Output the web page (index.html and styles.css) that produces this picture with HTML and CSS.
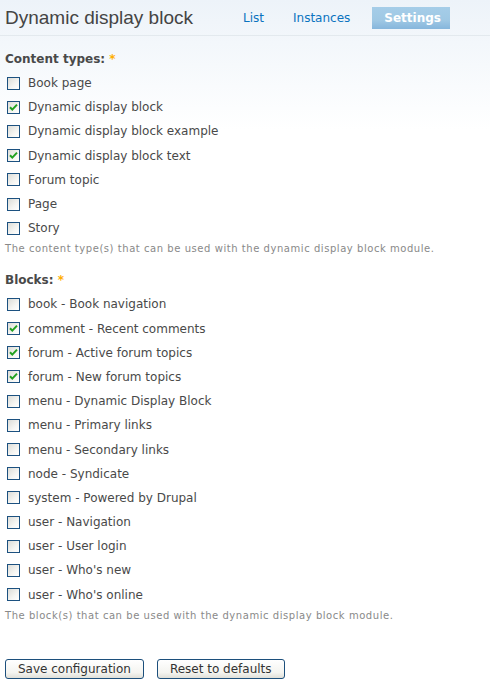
FILE: index.html
```html
<!DOCTYPE html>
<html lang="en">
<head>
    <meta charset="UTF-8">
    <title>Dynamic display block</title>
    <link rel="stylesheet" href="styles.css">
</head>
<body>

<div class="header">
    <h1>Dynamic display block</h1>
    <ul class="tabs">
        <li><a href="#">List</a></li>
        <li><a href="#">Instances</a></li>
        <li class="active"><a href="#">Settings</a></li>
    </ul>
</div>

<form class="settings">
    <div class="form-item">
        <div class="form-label">Content types: <span class="required">*</span></div>
        <div class="options">
            <label class="option"><span class="box"></span>Book page</label>
            <label class="option"><span class="box"><svg viewBox="0 0 9 9"><path d="M1 4.2 L3.3 6.6 L8 1.6" /></svg></span>Dynamic display block</label>
            <label class="option"><span class="box"></span>Dynamic display block example</label>
            <label class="option"><span class="box"><svg viewBox="0 0 9 9"><path d="M1 4.2 L3.3 6.6 L8 1.6" /></svg></span>Dynamic display block text</label>
            <label class="option"><span class="box"></span>Forum topic</label>
            <label class="option"><span class="box"></span>Page</label>
            <label class="option"><span class="box"></span>Story</label>
        </div>
        <div class="description">The content type(s) that can be used with the dynamic display block module.</div>
    </div>

    <div class="form-item">
        <div class="form-label">Blocks: <span class="required">*</span></div>
        <div class="options">
            <label class="option"><span class="box"></span>book - Book navigation</label>
            <label class="option"><span class="box"><svg viewBox="0 0 9 9"><path d="M1 4.2 L3.3 6.6 L8 1.6" /></svg></span>comment - Recent comments</label>
            <label class="option"><span class="box"><svg viewBox="0 0 9 9"><path d="M1 4.2 L3.3 6.6 L8 1.6" /></svg></span>forum - Active forum topics</label>
            <label class="option"><span class="box"><svg viewBox="0 0 9 9"><path d="M1 4.2 L3.3 6.6 L8 1.6" /></svg></span>forum - New forum topics</label>
            <label class="option"><span class="box"></span>menu - Dynamic Display Block</label>
            <label class="option"><span class="box"></span>menu - Primary links</label>
            <label class="option"><span class="box"></span>menu - Secondary links</label>
            <label class="option"><span class="box"></span>node - Syndicate</label>
            <label class="option"><span class="box"></span>system - Powered by Drupal</label>
            <label class="option"><span class="box"></span>user - Navigation</label>
            <label class="option"><span class="box"></span>user - User login</label>
            <label class="option"><span class="box"></span>user - Who's new</label>
            <label class="option"><span class="box"></span>user - Who's online</label>
        </div>
        <div class="description">The block(s) that can be used with the dynamic display block module.</div>
    </div>

    <div class="buttons">
        <button type="button" class="button">Save configuration</button>
        <button type="button" class="button">Reset to defaults</button>
    </div>
</form>

</body>
</html>
```

FILE: styles.css
```css
html {
    background-color: #fff;
}
body {
    margin: 0;
    font-family: "DejaVu Sans", Verdana, sans-serif;
    font-size: 12px;
    color: #494949;
    background: #fff linear-gradient(#edf3f9 0px, #ffffff 130px) no-repeat;
    background-size: 100% 130px;
}
.header {
    display: flex;
    align-items: center;
    height: 35px;
    border-bottom: 1px solid #e3e9ee;
    padding-left: 5px;
}
h1 {
    margin: 0;
    width: 227px;
    font-family: "Liberation Sans", Arial, sans-serif;
    font-size: 19px;
    font-weight: normal;
    color: #444;
}
.tabs {
    display: flex;
    margin: 0;
    padding: 0;
    list-style: none;
}
.tabs li a {
    display: block;
    padding: 4px 12px 4px 11px;
    margin-right: 6px;
    font-size: 12px;
    color: #0a73bf;
    text-decoration: none;
}
.tabs li.active a {
    width: 54px;
    margin-left: 4px;
    padding: 4px 12px;
    text-align: center;
    color: #fff;
    font-weight: bold;
    background: linear-gradient(#a5cde8 0%, #9fc8e4 60%, #86b6dc 100%);
}
.settings {
    padding: 12px 5px 0 5px;
}
.form-item {
    margin-bottom: 15px;
}
.form-label {
    font-weight: bold;
    height: 23px;
    line-height: 23px;
}
.required {
    color: #ffae00;
}
.option {
    display: flex;
    align-items: center;
    height: 24.2px;
    padding-left: 2px;
}
.box {
    display: flex;
    align-items: center;
    justify-content: center;
    width: 11px;
    height: 11px;
    margin-right: 8px;
    border: 1px solid #1c5180;
    background: linear-gradient(135deg, #dcdcd7 0%, #f5f5f2 60%, #ffffff 100%);
}
.box svg {
    width: 9px;
    height: 9px;
    fill: none;
    stroke: #21a121;
    stroke-width: 2;
}
.description {
    margin-top: 3px;
    font-size: 10px;
    letter-spacing: 0.55px;
    color: #898989;
}
.buttons {
    display: flex;
    gap: 13px;
    padding-top: 23px;
}
.button {
    height: 20px;
    padding: 0 12px;
    font-family: "DejaVu Sans", Verdana, sans-serif;
    font-size: 12px;
    color: #333;
    border: 1px solid #1c4f7c;
    border-radius: 3px;
    background: linear-gradient(#ffffff 0%, #f4f4f0 70%, #e0dfd8 100%);
}
```
